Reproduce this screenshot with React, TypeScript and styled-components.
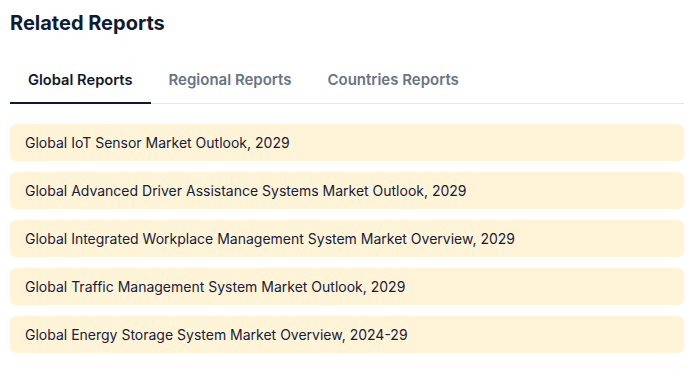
import React, { useState } from "react";
import styled, { createGlobalStyle } from "styled-components";

const GlobalStyle = createGlobalStyle`
  body {
    margin: 0;
    background: #fff;
    font-family: Inter, "Noto Sans", sans-serif;
  }
`;

const Wrapper = styled.div`
  width: 674px;
  padding: 10px 10px 0;
`;

const Title = styled.h2`
  margin: 0;
  font-size: 20px;
  line-height: 26px;
  font-weight: 700;
  color: #0d1b33;
`;

const TabBar = styled.div`
  display: flex;
  margin-top: 34px;
  border-bottom: 1px solid #e6e7ea;
`;

const Tab = styled.div<{ $active?: boolean }>`
  padding: 0 18px 12px;
  font-size: ${(p) => (p.$active ? "14.7px" : "15px")};
  line-height: 20px;
  font-weight: 600;
  color: ${(p) => (p.$active ? "#111827" : "#687386")};
  border-bottom: 2px solid ${(p) => (p.$active ? "#0d1b33" : "transparent")};
  margin-bottom: -1px;
  cursor: pointer;
`;

const List = styled.div`
  display: flex;
  flex-direction: column;
  gap: 11px;
  margin-top: 20px;
`;

const Item = styled.div`
  height: 37px;
  display: flex;
  align-items: center;
  padding: 0 15px;
  background: #fff4d8;
  border-radius: 6px;
  font-size: 14px;
  color: #17203a;
`;

const tabs = ["Global Reports", "Regional Reports", "Countries Reports"];

const reports = [
  "Global IoT Sensor Market Outlook, 2029",
  "Global Advanced Driver Assistance Systems Market Outlook, 2029",
  "Global Integrated Workplace Management System Market Overview, 2029",
  "Global Traffic Management System Market Outlook, 2029",
  "Global Energy Storage System Market Overview, 2024-29",
];

const App = () => {
  const [active, setActive] = useState(0);
  return (
    <Wrapper>
      <GlobalStyle />
      <Title>Related Reports</Title>
      <TabBar>
        {tabs.map((t, i) => (
          <Tab key={t} $active={active === i} onClick={() => setActive(i)}>
            {t}
          </Tab>
        ))}
      </TabBar>
      <List>
        {reports.map((r) => (
          <Item key={r}>{r}</Item>
        ))}
      </List>
    </Wrapper>
  );
};

export default App;
